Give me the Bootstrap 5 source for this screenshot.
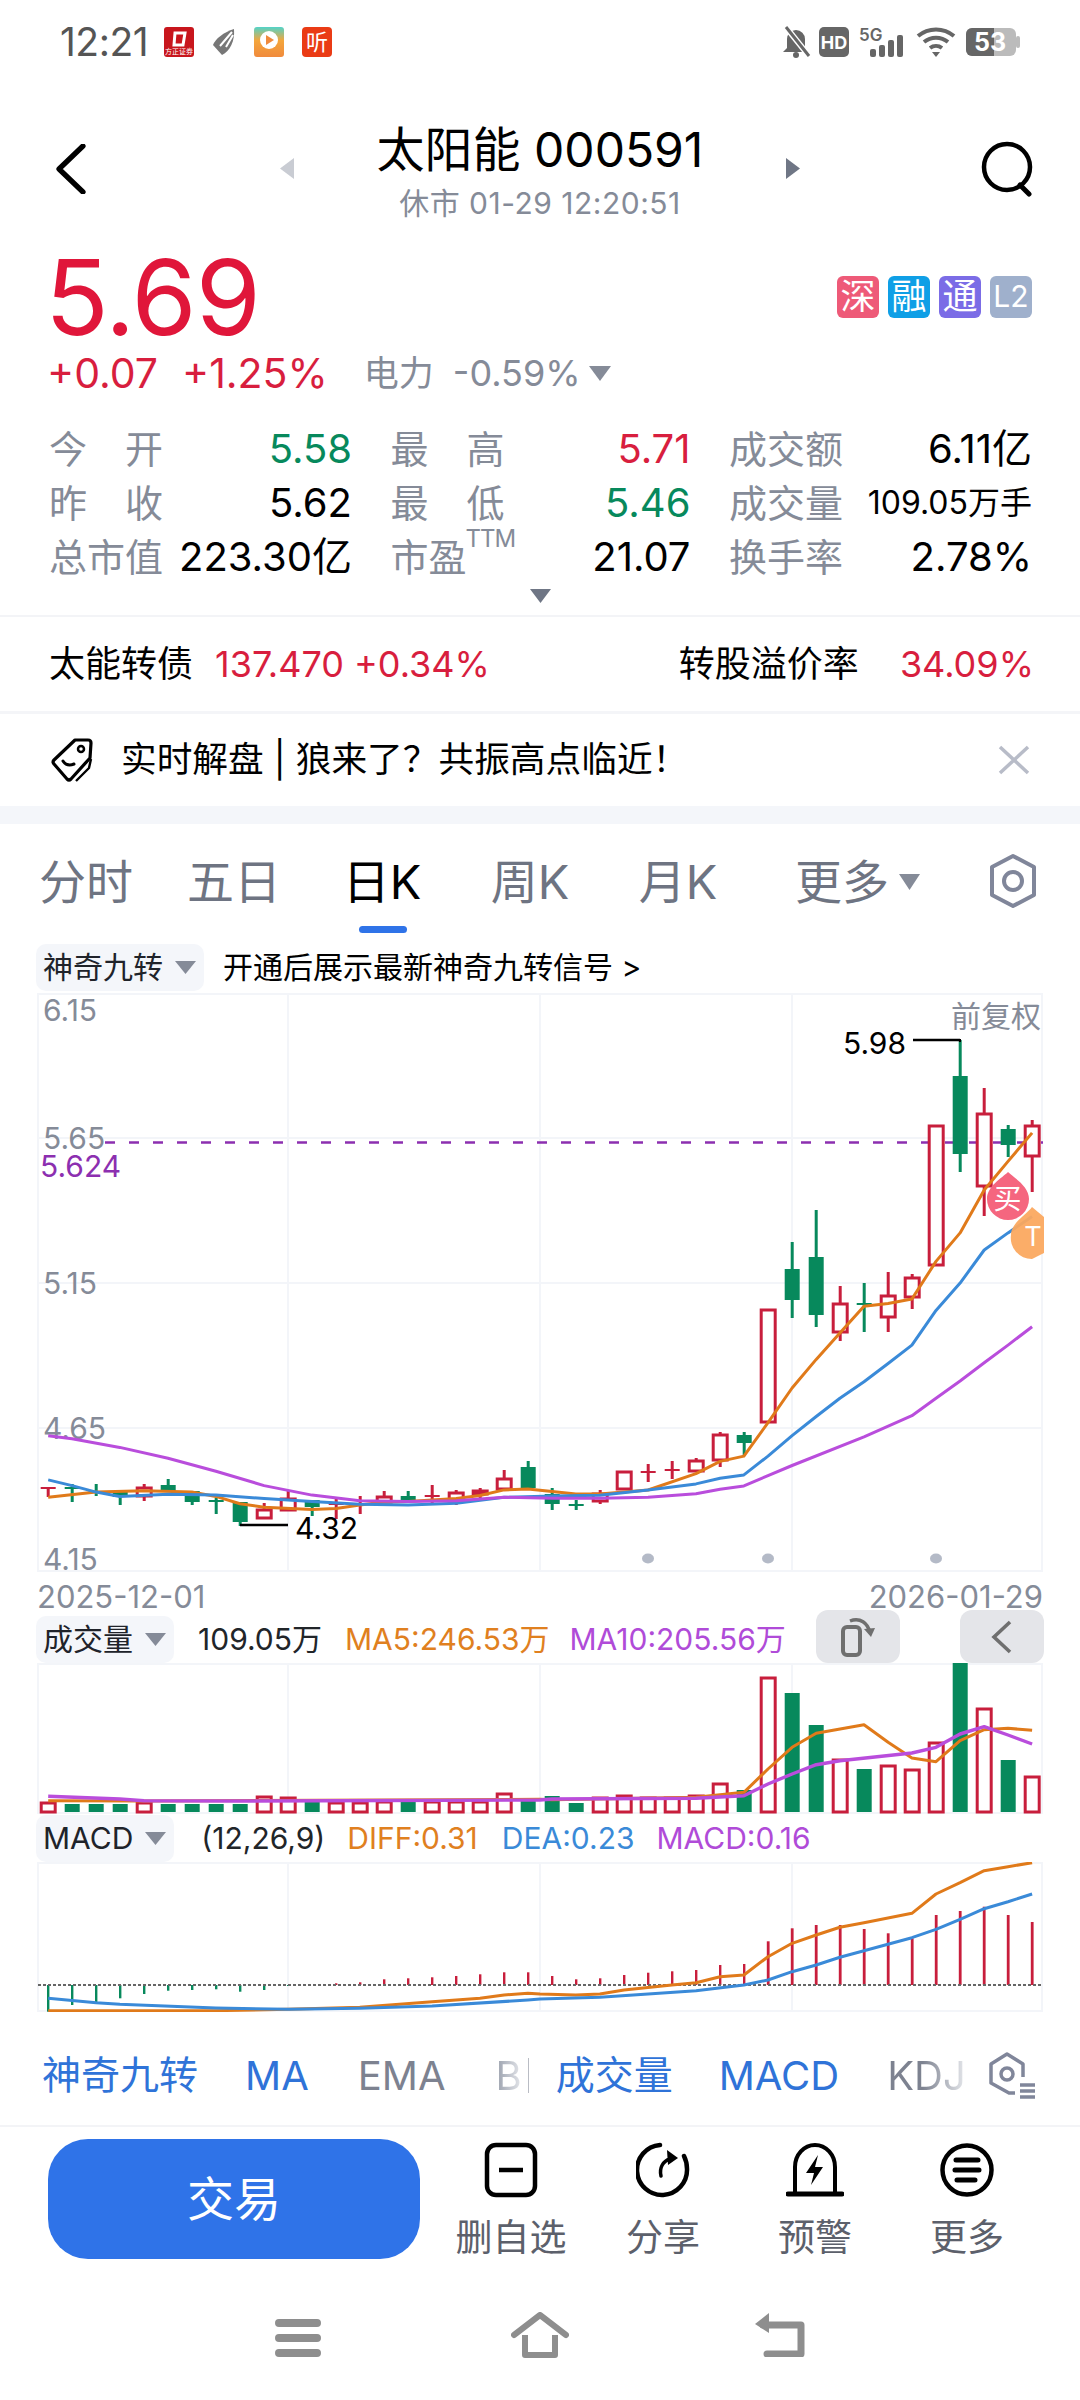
<!DOCTYPE html>
<html lang="zh-CN">
<head>
<meta charset="UTF-8" />
<meta name="viewport" content="width=device-width, initial-scale=1" />
<title>太阳能 000591</title>
<link href="https://cdn.jsdelivr.net/npm/bootstrap@5.3.0/dist/css/bootstrap.min.css" rel="stylesheet" />
<style>
    html, body { margin: 0; background: #fff; }
    body {
        width: 1080px;
        height: 2400px;
        overflow: hidden;
        font-family: Inter, "Noto Sans CJK SC", sans-serif;
        color: #000;
    }
    svg { display: block; flex: none; }
    .c-red { color: #d81e3e; }
    .c-green { color: #07895c; }
    .c-grey { color: #858b98; }
    .c-orange { color: #e0801f; }
    .c-blue { color: #3a8ad8; }
    .c-purple { color: #b04bd8; }

    .status-bar { height: 84px; padding: 27px 60px 27px 60px; }
    .status-time { font-size: 39px; line-height: 30px; color: #555; width: 104px; letter-spacing: -.5px; white-space: nowrap; }
    .status-apps { gap: 18px; }
    .status-right { margin-left: auto; }
    .app-ting { width: 30px; height: 30px; border-radius: 4px; background: #ea3b15; font-size: 22px; line-height: 1; }

    .stock-head { height: 144px; display: grid; grid-template-columns: 1fr 520px 1fr; }
    .head-left { padding: 60px 0 0 56px; }
    .head-right { padding: 57px 44px 0 0; }
    .head-title { font-size: 48px; line-height: 58px; margin-top: 37px; white-space: nowrap; }
    .head-sub { font-size: 30px; line-height: 36px; margin-top: 6px; color: #858b98; white-space: nowrap; letter-spacing: .5px; }
    .head-arrow { margin-top: 74px; }

    .price-block { height: 194px; padding: 19px 48px 0 48px; }
    .price-big { font-size: 105px; line-height: 100px; color: #e0163a; letter-spacing: -1px; margin-left: -3px; }
    .tag-row { gap: 9px; margin-top: 29px; }
    .tag-item { width: 42px; height: 42px; border-radius: 6px; color: #fff; font-size: 35px; line-height: 40px; text-align: center; white-space: nowrap; }
    .tag-shen { background: #ee5a78; }
    .tag-rong { background: #0f9fe6; }
    .tag-tong { background: #7b6ce6; }
    .tag-l2 { background: #9fb0cc; font-size: 30px; }
    .change-row { font-size: 41px; line-height: 44px; margin-top: 4px; color: #d81e3e; white-space: nowrap; margin-left: -1px; }
    .change-gap { margin-left: 24px; }
    .change-name { font-size: 35px; margin-left: 36px; }
    .change-pct { font-size: 36px; margin-left: 19px; }

    .stat-grid { display: grid; grid-template-columns: 303px 300px 303px; column-gap: 38.5px; padding-left: 49px; }
    .stat-cell { height: 54px; line-height: 54px; font-size: 40px; white-space: nowrap; }
    .stat-label { width: 114px; color: #858b98; font-size: 38px; }
    .stat-pe { width: auto; }
    .stat-vol { font-size: 32px; }
    .stat-ttm { font-size: 24px; line-height: 24px; margin: -36px 0 0 -1px; color: #858b98; letter-spacing: -1px; }
    .expand-row { height: 33px; padding-top: 5px; border-bottom: 2px solid #f3f4f7; }

    .bond-row { height: 97px; padding: 0 46px 0 49px; font-size: 36px; white-space: nowrap; border-bottom: 3px solid #f4f5f8; }
    .bond-val { margin-left: 22px; }
    .bond-rate { margin-left: 41px; }
    .banner-row { height: 92px; padding: 0 50px; font-size: 35.7px; white-space: nowrap; }
    .banner-icon { margin-right: 27px; }
    .section-gap { height: 18px; background: #f4f6fa; }

    .period-tabs { height: 119px; position: relative; padding: 29px 42px 0 12px; }
    .period-item { width: 148px; text-align: center; font-size: 47px; line-height: 58px; color: #6e7482; white-space: nowrap; }
    .period-item.is-on { color: #000; }
    .period-more { padding-left: 43px; gap: 10px; }
    .period-bar { position: absolute; left: 359px; top: 102px; width: 48px; height: 7px; background: #2f73e8; border-radius: 4px; }

    .ind-head { padding-left: 36px; white-space: nowrap; font-size: 30px; height: 49px; margin-bottom: 1px; }
    .ind-sub { height: 47px; margin-bottom: 0; }
    .ind-pill { background: #f4f6fa; border-radius: 10px; height: 47px; padding: 0 8px 0 7px; gap: 12px; color: #20232a; }
    .gap-19 { margin-left: 19px; }
    .gap-20 { margin-left: 20px; }
    .gap-22 { margin-left: 22px; }
    .gap-23 { margin-left: 23px; }
    .gap-24 { margin-left: 24px; }
    .gap-27 { margin-left: 27px; }

    .chart-wrap { width: 1080px; position: relative; }
    .date-row { height: 43px; padding: 0 37px; font-size: 31px; line-height: 48px; color: #858b98; }
    .mini-btn { width: 84px; height: 53px; background: #e4e5e9; border-radius: 12px; margin-top: -6px; }
    .mini-last { margin-left: 60px; margin-right: 36px; }
    .chart-txt { font-family: Inter, "Noto Sans CJK SC", sans-serif; }

    .ind-tabs { height: 115px; padding: 14px 0 0 42px; font-size: 39px; white-space: nowrap; border-bottom: 2px solid #f3f4f7; }
    .ind-tab { color: #2f73d8; }
    .ind-off { color: #7d8290; }
    .ind-latin { font-size: 40px; }
    .fade-tab { background: linear-gradient(90deg, #9aa0ad, #e6e8ec); -webkit-background-clip: text; background-clip: text; color: transparent; }
    .fade-kdj { background: linear-gradient(90deg, #7d8290 45%, #e6e8ec); -webkit-background-clip: text; background-clip: text; color: transparent; }
    .split-line { width: 1px; height: 35px; background: #b9bcc4; }
    .tab-m46 { margin-left: 46px; }
    .tab-m47 { margin-left: 47px; }
    .tab-m48 { margin-left: 48px; }
    .tab-m49 { margin-left: 49px; }
    .tab-m50 { margin-left: 50px; }
    .tab-m6 { margin-left: 6px; }
    .tab-m27 { margin-left: 27px; }
    .tab-end { margin-right: 43px; }

    .action-row { height: 153px; padding: 12px 0 0 48px; }
    .trade-btn { width: 372px; height: 120px; border-radius: 40px; background: #2f73e8; border: 0; color: #fff; font-size: 47px; }
    .action-list { margin-left: 15px; }
    .action-item { width: 152px; color: #5c606b; font-size: 37px; line-height: 44px; white-space: nowrap; }
    .action-item svg { margin: 3px 0 18px 0; }

    .nav-row { height: 120px; padding-top: 32px; }
    .nav-menu { margin-top: 7px; }
    .nav-home { margin-left: 190px; }
    .nav-back { margin-left: 186px; margin-top: 1px; }
</style>
</head>
<body>

<div class="status-bar d-flex align-items-center">
    <div class="status-time">12:21</div>
    <div class="status-apps d-flex align-items-center">
        <svg width="30" height="30" viewBox="0 0 30 30"><rect width="30" height="30" rx="3" fill="#c8161d"/><path d="M11 6h10l-2 12h-9z" fill="none" stroke="#fff" stroke-width="3"/><text x="15" y="27" font-size="7" fill="#fff" text-anchor="middle">方正证券</text></svg>
        <svg width="24" height="26" viewBox="0 0 24 26"><path d="M22 0C12 3 3 10 1 16l9 10C18 22 23 12 22 0z" fill="#777"/><path d="M20 3L8 17M14 18L21 6" stroke="#fff" stroke-width="2"/></svg>
        <svg width="30" height="30" viewBox="0 0 30 30"><defs><linearGradient id="appg" x1="0" y1="0" x2="0" y2="1"><stop offset="0" stop-color="#52d3c8"/><stop offset=".45" stop-color="#f4a63c"/><stop offset="1" stop-color="#f08a3c"/></linearGradient></defs><rect width="30" height="30" rx="3" fill="url(#appg)"/><circle cx="15" cy="13" r="9" fill="#fff"/><path d="M12 8l8 5-8 5z" fill="#f08a3c"/></svg>
        <div class="d-flex align-items-center justify-content-center text-white app-ting">听</div>
    </div>
    <div class="status-right d-flex align-items-center">
        <svg width="237" height="32" viewBox="0 0 237 32">
            <path d="M4 22V13a9 9 0 0 1 18 0v9l4 4H0z" fill="#666"/><circle cx="13" cy="29" r="3" fill="#666"/><path d="M2 0l24 30" stroke="#fff" stroke-width="6"/><path d="M3 1l23 29" stroke="#666" stroke-width="3"/>
            <rect x="36" y="1" width="30" height="30" rx="5" fill="#666"/><text x="51" y="23" font-size="18" font-weight="700" fill="#fff" text-anchor="middle">HD</text>
            <text x="76" y="15" font-size="17" font-weight="600" fill="#666">5G</text>
            <rect x="87" y="23" width="6" height="8" rx="2" fill="#666"/><rect x="96" y="19" width="6" height="12" rx="2" fill="#666"/><rect x="105" y="14" width="6" height="17" rx="2" fill="#666"/><rect x="114" y="9" width="6" height="22" rx="2" fill="#666"/>
            <path d="M135 10a28 28 0 0 1 36 0M141 16a19 19 0 0 1 24 0M147 22a10 10 0 0 1 12 0" fill="none" stroke="#666" stroke-width="4"/><path d="M149 26h8l-4 5z" fill="#666"/>
            <rect x="183" y="2" width="50" height="28" rx="6" fill="#bbb"/><path d="M189 2h22v28h-22a6 6 0 0 1-6-6V8a6 6 0 0 1 6-6z" fill="#666"/><rect x="233" y="10" width="4" height="12" rx="2" fill="#bbb"/><text x="207" y="25" font-size="25" font-weight="700" fill="#fff" text-anchor="middle">53</text>
        </svg>
    </div>
</div>

<div class="stock-head">
    <div class="head-left">
        <svg width="30" height="50" viewBox="0 0 30 50"><path d="M27 2L3 25l24 23" fill="none" stroke="#000" stroke-width="5.2" stroke-linecap="round" stroke-linejoin="round"/></svg>
    </div>
    <div class="d-flex justify-content-between align-items-start">
        <svg class="head-arrow" width="15" height="21" viewBox="0 0 15 21"><path d="M14 0v21L0 10.5z" fill="#c9ccd3"/></svg>
        <div class="text-center">
            <div class="head-title">太阳能 000591</div>
            <div class="head-sub">休市 01-29 12:20:51</div>
        </div>
        <svg class="head-arrow" width="15" height="21" viewBox="0 0 15 21"><path d="M1 0v21L15 10.5z" fill="#6f7685"/></svg>
    </div>
    <div class="head-right d-flex justify-content-end">
        <svg width="56" height="56" viewBox="0 0 56 56"><circle cx="27" cy="26" r="23" fill="none" stroke="#000" stroke-width="4.5"/><path d="M40 44l9 9" stroke="#000" stroke-width="5" stroke-linecap="round"/></svg>
    </div>
</div>

<div class="price-block">
    <div class="d-flex justify-content-between align-items-start">
        <div class="price-big">5.69</div>
        <div class="tag-row d-flex">
            <div class="tag-item tag-shen">深</div>
            <div class="tag-item tag-rong">融</div>
            <div class="tag-item tag-tong">通</div>
            <div class="tag-item tag-l2">L2</div>
        </div>
    </div>
    <div class="change-row d-flex align-items-center">
        <span>+0.07</span>
        <span class="change-gap">+1.25%</span>
        <span class="c-grey change-name">电力</span>
        <span class="c-grey change-pct">-0.59%</span>
        <svg class="ms-2" width="22" height="15" viewBox="0 0 22 15"><path d="M0 0h22L11 15z" fill="#858b98"/></svg>
    </div>
</div>

<div class="stat-grid">
    <div class="stat-cell d-flex justify-content-between"><span class="stat-label d-flex justify-content-between"><span>今</span><span>开</span></span><span class="c-green">5.58</span></div>
    <div class="stat-cell d-flex justify-content-between"><span class="stat-label d-flex justify-content-between"><span>最</span><span>高</span></span><span class="c-red">5.71</span></div>
    <div class="stat-cell d-flex justify-content-between"><span class="stat-label">成交额</span><span>6.11亿</span></div>
    <div class="stat-cell d-flex justify-content-between"><span class="stat-label d-flex justify-content-between"><span>昨</span><span>收</span></span><span>5.62</span></div>
    <div class="stat-cell d-flex justify-content-between"><span class="stat-label d-flex justify-content-between"><span>最</span><span>低</span></span><span class="c-green">5.46</span></div>
    <div class="stat-cell d-flex justify-content-between"><span class="stat-label">成交量</span><span class="stat-vol">109.05万手</span></div>
    <div class="stat-cell d-flex justify-content-between"><span class="stat-label">总市值</span><span>223.30亿</span></div>
    <div class="stat-cell d-flex justify-content-between"><span class="d-flex align-items-center"><span class="stat-label stat-pe">市盈</span><span class="stat-ttm">TTM</span></span><span>21.07</span></div>
    <div class="stat-cell d-flex justify-content-between"><span class="stat-label">换手率</span><span>2.78%</span></div>
</div>
<div class="expand-row d-flex justify-content-center">
    <svg width="21" height="14" viewBox="0 0 21 14"><path d="M0 0h21L10.5 14z" fill="#6f7685"/></svg>
</div>

<div class="bond-row d-flex align-items-center">
    <span>太能转债</span>
    <span class="c-red bond-val">137.470 +0.34%</span>
    <span class="ms-auto">转股溢价率</span>
    <span class="c-red bond-rate">34.09%</span>
</div>

<div class="banner-row d-flex align-items-center">
    <svg class="banner-icon" width="44" height="46" viewBox="0 0 44 46"><path d="M25 3h13q3 0 3 3l-1 15-19 21q-2 2-4 0L4 27q-2-2 0-4z" fill="none" stroke="#000" stroke-width="3.2" stroke-linejoin="round"/><circle cx="31" cy="12" r="3" fill="none" stroke="#000" stroke-width="2.5"/><path d="M13 24q4 6 11 3" fill="none" stroke="#000" stroke-width="3" stroke-linecap="round"/><path d="M41 22l-2 9-13 13" fill="none" stroke="#000" stroke-width="2.4"/></svg>
    <span>实时解盘 | 狼来了？共振高点临近！</span>
    <svg class="ms-auto" width="32" height="30" viewBox="0 0 32 30"><path d="M2 2l28 26M30 2L2 28" stroke="#b8bcc8" stroke-width="3.5"/></svg>
</div>
<div class="section-gap"></div>

<div class="period-tabs d-flex align-items-start">
    <div class="period-item">分时</div>
    <div class="period-item">五日</div>
    <div class="period-item is-on">日K</div>
    <div class="period-item">周K</div>
    <div class="period-item">月K</div>
    <div class="period-item period-more d-flex align-items-center">更多<svg width="21" height="16" viewBox="0 0 21 16"><path d="M0 0h21L10.5 16z" fill="#858b98"/></svg></div>
    <svg class="ms-auto" width="50" height="56" viewBox="0 0 50 56"><path d="M25 3l21 11v28L25 53 4 42V14z" fill="none" stroke="#80869a" stroke-width="4" stroke-linejoin="round"/><circle cx="25" cy="28" r="9" fill="none" stroke="#80869a" stroke-width="4"/></svg>
    <div class="period-bar"></div>
</div>

<div class="ind-head d-flex align-items-center">
    <div class="ind-pill d-flex align-items-center">神奇九转<svg width="21" height="13" viewBox="0 0 21 13"><path d="M0 0h21L10.5 13z" fill="#858b98"/></svg></div>
    <span class="gap-19">开通后展示最新神奇九转信号 &gt;</span>
</div>

<div class="chart-wrap"><svg id="chartMain" class="chart-txt" width="1080" height="580" viewBox="0 993 1080 580"></svg></div>
<div class="date-row d-flex justify-content-between"><span>2025-12-01</span><span>2026-01-29</span></div>

<div class="ind-head ind-sub d-flex align-items-center">
    <div class="ind-pill d-flex align-items-center">成交量<svg width="21" height="13" viewBox="0 0 21 13"><path d="M0 0h21L10.5 13z" fill="#858b98"/></svg></div>
    <span class="gap-24 text-dark">109.05万</span>
    <span class="c-orange gap-23">MA5:246.53万</span>
    <span class="c-purple gap-20">MA10:205.56万</span>
    <div class="mini-btn d-flex align-items-center justify-content-center ms-auto">
        <svg width="36" height="42" viewBox="0 0 36 42"><rect x="3" y="11" width="17" height="28" rx="4" fill="none" stroke="#6f6f6f" stroke-width="4"/><path d="M10 5c10-4 18 2 20 12" fill="none" stroke="#6f6f6f" stroke-width="3.5"/><path d="M24 13l7 8 4-9z" fill="#6f6f6f"/></svg>
    </div>
    <div class="mini-btn mini-last d-flex align-items-center justify-content-center">
        <svg width="22" height="36" viewBox="0 0 22 36"><path d="M19 3L3 18l16 15" fill="none" stroke="#6f6f6f" stroke-width="3.6"/></svg>
    </div>
</div>
<div class="chart-wrap"><svg id="chartVol" class="chart-txt" width="1080" height="152" viewBox="0 1664 1080 152"></svg></div>

<div class="ind-head ind-sub d-flex align-items-center">
    <div class="ind-pill d-flex align-items-center">MACD<svg width="21" height="13" viewBox="0 0 21 13"><path d="M0 0h21L10.5 13z" fill="#858b98"/></svg></div>
    <span class="gap-27 text-dark">(12,26,9)</span>
    <span class="c-orange gap-22">DIFF:0.31</span>
    <span class="c-blue gap-24">DEA:0.23</span>
    <span class="c-purple gap-22">MACD:0.16</span>
</div>
<div class="chart-wrap"><svg id="chartMacd" class="chart-txt" width="1080" height="150" viewBox="0 1862 1080 150"></svg></div>

<div class="ind-tabs d-flex align-items-center">
    <span class="ind-tab">神奇九转</span>
    <span class="ind-tab ind-latin tab-m47">MA</span>
    <span class="ind-off ind-latin tab-m49">EMA</span>
    <span class="fade-tab ind-latin tab-m50">B</span>
    <span class="split-line tab-m6"></span>
    <span class="ind-tab tab-m27">成交量</span>
    <span class="ind-tab ind-latin tab-m46">MACD</span>
    <span class="fade-kdj ind-latin tab-m48">KDJ</span>
    <svg class="ms-auto tab-end" width="50" height="48" viewBox="0 0 50 48"><path d="M28 41H22L4 31V12L20 2l16 10v13" fill="none" stroke="#80869a" stroke-width="3.5" stroke-linejoin="round"/><circle cx="20" cy="22" r="6" fill="none" stroke="#80869a" stroke-width="3.5"/><path d="M33 33h15M33 39h15M33 45h15" stroke="#80869a" stroke-width="3.5"/></svg>
</div>

<div class="action-row d-flex align-items-start">
    <button class="trade-btn" type="button">交易</button>
    <div class="action-list d-flex">
        <div class="action-item d-flex flex-column align-items-center">
            <svg width="54" height="56" viewBox="0 0 54 56"><rect x="3" y="3" width="48" height="50" rx="9" fill="none" stroke="#000" stroke-width="4.5"/><path d="M15 28h24" stroke="#000" stroke-width="4.5"/></svg>
            删自选
        </div>
        <div class="action-item d-flex flex-column align-items-center">
            <svg width="54" height="56" viewBox="0 0 54 56"><path d="M24 3a25 25 0 1 0 27 24c0-5-1-9-3-13" fill="none" stroke="#000" stroke-width="4.5" stroke-linecap="round"/><path d="M25 34c-2-8 2-15 9-17" fill="none" stroke="#000" stroke-width="3.5" stroke-linecap="round"/><path d="M31 8l11 8-10 7z" fill="#000"/></svg>
            分享
        </div>
        <div class="action-item d-flex flex-column align-items-center">
            <svg width="58" height="56" viewBox="0 0 58 56"><path d="M9 51V25a20 22 0 0 1 40 0v26" fill="none" stroke="#000" stroke-width="4"/><path d="M2 52h54" stroke="#000" stroke-width="5" stroke-linecap="round"/><path d="M32 13L20 31h8l-3 12 12-18h-8z" fill="#000"/></svg>
            预警
        </div>
        <div class="action-item d-flex flex-column align-items-center">
            <svg width="54" height="56" viewBox="0 0 54 56"><circle cx="27" cy="28" r="24.5" fill="none" stroke="#000" stroke-width="4.5"/><path d="M16 18h22M15 28h24M17 38h18" stroke="#000" stroke-width="5" stroke-linecap="round"/></svg>
            更多
        </div>
    </div>
</div>

<div class="nav-row d-flex justify-content-center align-items-start">
    <svg class="nav-menu" width="46" height="38" viewBox="0 0 46 38"><path d="M4 4h38M4 19h38M4 34h38" stroke="#8e8e8e" stroke-width="8" stroke-linecap="round"/></svg>
    <svg class="nav-home" width="58" height="46" viewBox="0 0 58 46"><path d="M3 23L29 3l26 20" fill="none" stroke="#8e8e8e" stroke-width="6" stroke-linejoin="round" stroke-linecap="round"/><path d="M14 23v20h30V23" fill="none" stroke="#8e8e8e" stroke-width="6" stroke-linejoin="round"/></svg>
    <svg class="nav-back" width="50" height="44" viewBox="0 0 50 44"><path d="M8 12h38v29H12" fill="none" stroke="#8e8e8e" stroke-width="7" stroke-linejoin="round" stroke-linecap="round"/><path d="M14 0v20L0 11z" fill="#8e8e8e"/></svg>
</div>

<script>
    const RED = '#c81e3c', GREEN = '#07895c';
    const ORANGE = '#e07a1a', BLUE = '#3a8ad8', PURPLE = '#b94ddc';
    const xAt = i => 48.2 + 24 * i;

    // zoomed coordinates read off the reference, back to page pixels
    const mainL = ([x, y]) => [x / 2.904, 950 + y / 2.306];
    const mainR = ([x, y]) => [540 + x / 2.904, 990 + y / 2.45];
    const lowL = ([x, y]) => [x / 2.904, 1600 + y / 3];
    const lowR = ([x, y]) => [540 + x / 2.904, 1600 + y / 3];

    // wick top, body top, body bottom, wick bottom
    const candles = [
        ['r',1487,1487,1489,1497],['g',1484,1487,1489,1502],['g',1484,1491,1492,1496],['g',1491,1491,1497,1505],
        ['r',1484,1487,1497,1501],['g',1479,1485,1491,1491],['g',1491,1491,1502,1505],['g',1498,1500,1502,1514],
        ['g',1502,1502,1522,1526],['r',1503,1509,1519,1519],['r',1491,1498,1511,1511],['g',1500,1500,1507,1516],
        ['r',1498,1503,1505,1519],['r',1496,1503,1505,1514],['r',1491,1496,1503,1503],['g',1491,1496,1501,1501],
        ['r',1485,1495,1497,1504],['r',1490,1492,1502,1505],['r',1488,1490,1495,1501],['r',1470,1478,1490,1490],
        ['g',1461,1467,1488,1488],['g',1488,1494,1504,1510],['g',1500,1504,1506,1510],['r',1490,1493,1502,1504],
        ['r',1471,1471,1490,1490],['r',1464,1471,1473,1482],['r',1461,1469,1471,1479],['r',1458,1460,1472,1472],
        ['r',1432,1434,1461,1467],['g',1432,1435,1443,1455],['r',1309,1309,1423,1423],['g',1242,1269,1300,1318],
        ['g',1210,1257,1315,1327],['r',1286,1303,1333,1341],['g',1283,1303,1305,1332],['r',1272,1295,1318,1332],
        ['r',1274,1277,1298,1309],['r',1125,1125,1266,1266],['g',1040,1076,1154,1172],['r',1088,1113,1187,1216],
        ['g',1125,1129,1145,1157],['r',1120,1125,1157,1192]
    ];

    const volTops = [1803,1805,1805,1805,1803,1805,1805,1805,1805,1797,1798,1803,1803,1803,1802,1801,1802,1802,1802,1794,1799,
        1797,1804,1798,1796,1798,1798,1796,1784,1791,1678,1694,1726,1760,1770,1766,1770,1743,1664,1709,1761,1777];
    const volRed = candles.map(c => c[0] === 'r');

    // macd bar end, zoomed y; the zero line sits at 1155
    const macdEnds = [1235,1215,1207,1195,1182,1172,1170,1168,1175,1170,1158,1155,1150,1147,1138,1135,1132,1128,1123,1117,1117,
        1128,1138,1135,1125,1118,1114,1110,1095,1092,1024,985,975,975,987,1000,1015,945,933,920,945,966];

    const path = (pts, color, width) =>
        `<polyline points="${pts.map(p => p[0].toFixed(1) + ',' + p[1].toFixed(1)).join(' ')}" fill="none" stroke="${color}" stroke-width="${width}" stroke-linejoin="round"/>`;
    const label = (x, y, txt, size, color, anchor) =>
        `<text x="${x}" y="${y}" font-size="${size}" fill="${color}" text-anchor="${anchor || 'start'}" dominant-baseline="central">${txt}</text>`;
    const gridBox = (top, bottom, rows) => {
        let s = `<rect x="38" y="${top + 1}" width="1004" height="${bottom - top - 2}" fill="none" stroke="#f3f5f9" stroke-width="2"/>`;
        [288, 540, 792].forEach(x => { s += `<path d="M${x} ${top}V${bottom}" stroke="#f3f5f9" stroke-width="2"/>`; });
        rows.forEach(y => { s += `<path d="M38 ${y}H1042" stroke="#f3f5f9" stroke-width="2"/>`; });
        return s;
    };

    function drawMain() {
        let s = gridBox(993, 1572, [1138, 1283, 1428]);
        s += label(43, 1010, '6.15', 30, '#858b98') + label(43, 1138, '5.65', 30, '#858b98') + label(43, 1283, '5.15', 30, '#858b98');
        s += label(43, 1428, '4.65', 30, '#858b98') + label(43, 1559, '4.15', 30, '#858b98');
        s += label(40, 1166, '5.624', 30, '#8c2fb0');
        s += `<path d="M105 1142.5H1043" stroke="#8c2fb0" stroke-width="2.4" stroke-dasharray="10 14"/>`;
        s += label(951, 1016, '前复权', 30, '#858b98');
        candles.forEach((c, i) => {
            const x = xAt(i), color = c[0] === 'r' ? RED : GREEN;
            s += `<path d="M${x} ${c[1]}V${c[4]}" stroke="${color}" stroke-width="3"/>`;
            if (c[0] === 'r' && c[3] - c[2] > 4) {
                s += `<rect x="${x - 7}" y="${c[2] + 1}" width="14" height="${c[3] - c[2] - 2}" fill="#fff" stroke="${color}" stroke-width="3"/>`;
            } else {
                s += `<rect x="${x - 7.5}" y="${c[2]}" width="15" height="${Math.max(c[3] - c[2], 2)}" fill="${color}"/>`;
            }
        });
        const orange = [[140,1262],[279,1250],[418,1247],[557,1250],[627,1260],[697,1277],[767,1285],[906,1290],[976,1288],[1045,1280],[1115,1273],[1185,1272],[1325,1265],[1394,1258],[1464,1245],[1533,1243]].map(mainL)
            .concat([[35,1229],[104,1235],[174,1235],[314,1225],[453,1185],[523,1155],[592,1142],[662,1060],[732,975],[802,905],[871,840],[941,775],[1011,768],[1080,757],[1150,665],[1220,595],[1290,490],[1359,420],[1429,350]].map(mainR));
        const blue = [[140,1222],[209,1235],[279,1250],[348,1260],[488,1255],[627,1257],[767,1265],[906,1272],[1045,1278],[1185,1280],[1325,1276],[1464,1262]].map(mainL)
            .concat([[35,1240],[174,1238],[314,1225],[453,1210],[523,1196],[592,1188],[662,1142],[732,1092],[802,1045],[871,1000],[941,960],[1011,915],[1080,870],[1150,785],[1220,718],[1290,637],[1359,595],[1429,555]].map(mainR));
        const purple = [[140,1120],[209,1127],[348,1147],[488,1172],[627,1202],[767,1235],[906,1257],[1045,1270],[1185,1272],[1325,1270],[1464,1262]].map(mainL)
            .concat([[35,1245],[174,1245],[314,1243],[453,1234],[523,1223],[592,1215],[662,1190],[732,1165],[941,1095],[1080,1043],[1150,1000],[1220,958],[1290,913],[1359,870],[1429,825]].map(mainR));
        s += path(orange, ORANGE, 3) + path(blue, BLUE, 3) + path(purple, PURPLE, 3);
        [648, 768, 936].forEach(x => { s += `<ellipse cx="${x}" cy="1558.5" rx="6" ry="5" fill="#b4bac7"/>`; });
        s += `<path d="M240 1525H288M913 1040H960" stroke="#000" stroke-width="2.4"/>`;
        s += `<path d="M960 1039V1042" stroke="#000" stroke-width="2"/>`;
        s += label(295, 1528, '4.32', 30, '#000') + label(843, 1043, '5.98', 30, '#000');
        s += `<path d="M1008 1172c6 6 21 14 21 27a21 21 0 0 1-42 0c0-13 15-21 21-27z" fill="#f5667f"/>`;
        s += label(1007.5, 1199, '买', 28, '#fff', 'middle');
        s += `<path d="M1032 1207l12 10v36l-12 6a21 21 0 0 1-21-24c0-12 15-20 21-28z" fill="#fba85f" fill-opacity=".94"/>`;
        s += label(1033, 1236, 'T', 27, '#fff', 'middle');
        document.getElementById('chartMain').innerHTML = s;
    }

    function drawVol() {
        let s = gridBox(1664, 1815, []);
        volTops.forEach((top, i) => {
            const x = xAt(i);
            s += volRed[i]
                ? `<rect x="${x - 7}" y="${top + 1}" width="14" height="${1813 - top - 1}" fill="#fff" stroke="${RED}" stroke-width="3"/>`
                : `<rect x="${x - 7.5}" y="${top}" width="15" height="${1813 - top}" fill="${GREEN}"/>`;
        });
        const orange = [[140,605],[418,606],[1568,601]].map(lowL)
            .concat([[35,602],[453,595],[592,580],[662,510],[732,445],[802,403],[941,377],[1011,430],[1080,477],[1150,488],[1220,425],[1290,392],[1359,388],[1429,394]].map(lowR));
        const purple = [[140,592],[348,600],[418,605],[697,606],[1568,603]].map(lowL)
            .concat([[35,600],[453,598],[592,590],[662,555],[732,525],[802,497],[871,485],[1080,462],[1150,445],[1220,405],[1290,383],[1359,408],[1429,435]].map(lowR));
        s += path(orange, ORANGE, 3) + path(purple, PURPLE, 3.4);
        document.getElementById('chartVol').innerHTML = s;
    }

    function drawMacd() {
        let s = gridBox(1862, 2012, []);
        macdEnds.forEach((end, i) => {
            const y = 1600 + end / 3, color = end > 1155 ? GREEN : RED;
            if (end !== 1155) s += `<path d="M${xAt(i)} 1985V${y.toFixed(1)}" stroke="${color}" stroke-width="${i > 29 ? 2.8 : 2.4}"/>`;
        });
        s += `<path d="M38 1985H1043" stroke="#666" stroke-width="2" stroke-dasharray="3 2"/>`;
        const orange = [[140,1232],[418,1232],[627,1232],[837,1228],[1045,1222],[1255,1205],[1394,1195],[1464,1185],[1533,1180]].map(lowL)
            .concat([[0,1182],[104,1185],[174,1182],[244,1170],[383,1155],[453,1148],[523,1130],[592,1125],[662,1070],[732,1030],[802,1005],[871,982],[941,968],[1080,940],[1150,882],[1220,848],[1290,812],[1359,800],[1429,788]].map(lowR));
        const blue = [[140,1195],[279,1208],[348,1213],[627,1224],[837,1228],[1045,1225],[1255,1218],[1533,1200]].map(lowL)
            .concat([[0,1197],[174,1192],[314,1182],[453,1172],[592,1155],[662,1140],[732,1115],[802,1095],[871,1072],[941,1052],[1080,1013],[1150,988],[1220,958],[1290,926],[1359,905],[1429,882]].map(lowR));
        s += path(orange, ORANGE, 3) + path(blue, BLUE, 3);
        document.getElementById('chartMacd').innerHTML = s;
    }

    drawMain();
    drawVol();
    drawMacd();
</script>
<script src="https://cdn.jsdelivr.net/npm/bootstrap@5.3.0/dist/js/bootstrap.bundle.min.js"></script>
</body>
</html>
